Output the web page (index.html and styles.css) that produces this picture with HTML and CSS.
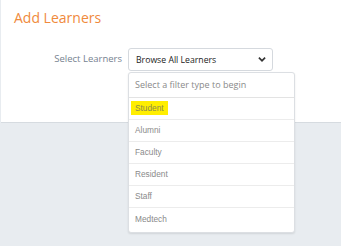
FILE: index.html
```html
<!DOCTYPE html>
<html>
<head>
<meta charset="utf-8">
<link rel="stylesheet" href="styles.css">
</head>
<body>
<div class="card">
  <h1 class="title">Add Learners</h1>
  <div class="field">
    <label class="label">Select Learners</label>
    <div class="picker">
      <div class="select">
        <span class="select-text">Browse All Learners</span>
        <svg class="chev" width="8" height="6" viewBox="0 0 8 6"><path d="M0.3 1.2 L1.5 0 L4 2.5 L6.5 0 L7.7 1.2 L4 5 Z" fill="#333"/></svg>
      </div>
      <div class="menu">
        <div class="search">Select a filter type to begin</div>
        <div class="item"><span class="hl">Student</span></div>
        <div class="item">Alumni</div>
        <div class="item">Faculty</div>
        <div class="item">Resident</div>
        <div class="item">Staff</div>
        <div class="item">Medtech</div>
      </div>
    </div>
  </div>
</div>
</body>
</html>
```
FILE: styles.css
```css
html, body { margin: 0; padding: 0; }
body {
  background: #e8ecf0;
  width: 341px;
  height: 246px;
  overflow: hidden;
  font-family: "Open Sans", "DejaVu Sans", sans-serif;
}
.card {
  margin-left: 1px;
  background: #fff;
  height: 123px;
  border-bottom: 1px solid #d6dbe0;
  box-sizing: border-box;
  padding: 9px 0 0 13px;
}
.title {
  margin: 0;
  font-size: 14px;
  font-weight: 400;
  color: #f08a3c;
  line-height: 18px;
}
.field {
  display: flex;
  align-items: flex-start;
  margin-top: 21px;
}
.label {
  width: 108px;
  text-align: right;
  font-size: 9.5px;
  color: #76828f;
  line-height: 22px;
  padding-right: 6px;
}
.picker { position: relative; }
.select {
  width: 145px;
  height: 23px;
  box-sizing: border-box;
  border: 1px solid #d5d9de;
  border-radius: 3px;
  display: flex;
  align-items: center;
  justify-content: space-between;
  padding: 0 6px 0 7px;
  font-size: 8.7px;
  color: #222;
}
.chev { display: block; }
.menu {
  position: absolute;
  left: 0;
  top: 24px;
  width: 167px;
  background: #fff;
  border: 1px solid #dcdfe3;
  border-radius: 3px;
  box-shadow: 0 1px 2px rgba(0,0,0,0.1);
  box-sizing: border-box;
}
.search {
  height: 24px;
  line-height: 23px;
  padding-left: 6px;
  font-size: 9px;
  color: #8a8a8a;
  border-bottom: 1px solid #e3e3e3;
}
.item {
  height: 21px;
  line-height: 21px;
  padding-left: 6px;
  font-family: "Liberation Sans", Arial, sans-serif;
  font-size: 8.3px;
  color: #8a8a8a;
  border-bottom: 1px solid #ececec;
}
.item:last-child { border-bottom: none; height: 24px; line-height: 22px; }
.hl {
  background: #ffee00;
  color: #8a8a50;
  padding: 2px 4px;
  margin-left: -4px;
}
```
